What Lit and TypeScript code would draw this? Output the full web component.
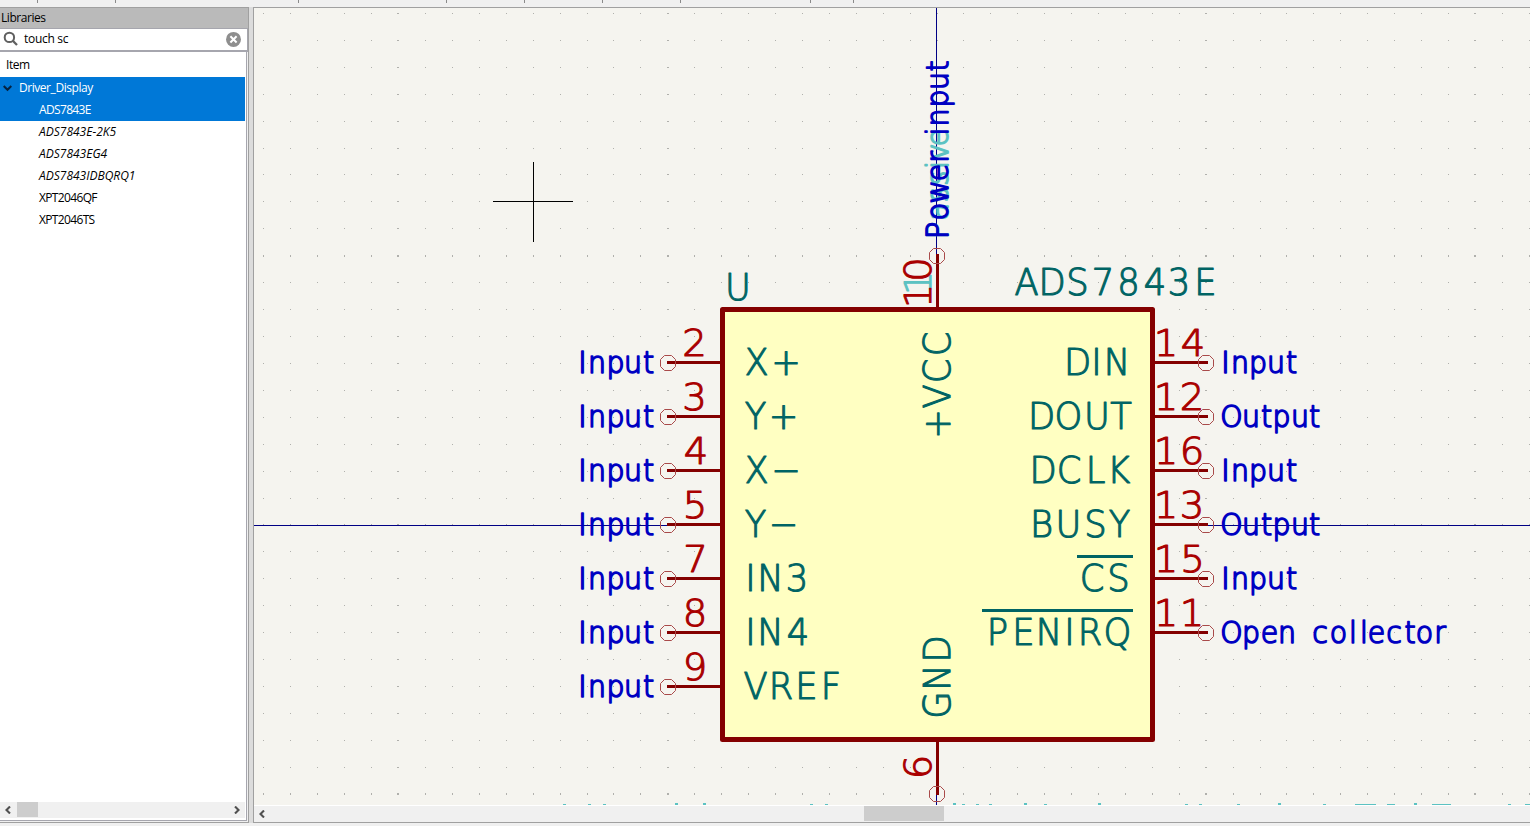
import { LitElement, html, svg, css } from "lit";
import { customElement } from "lit/decorators.js";

type Kind = "name" | "num" | "type" | "ghost" | "ghostnum";

interface Glyphs {
  text: string;
  at: number[];
  base: number;
  kind: Kind;
  up?: boolean;
  sx?: number;
}

const METRICS: Record<Kind, { size: number; sx: number }> = {
  name: { size: 37.6, sx: 0.94 },
  num: { size: 37.8, sx: 1.02 },
  type: { size: 29.6, sx: 0.96 },
  ghost: { size: 29.6, sx: 0.96 },
  ghostnum: { size: 37.8, sx: 1.02 },
};

const IN_L = [582.5, 597, 615.5, 633, 648.5];
const IN_R = [1225.5, 1240, 1258, 1276, 1291.5];
const OUT_R = [1231.5, 1251, 1266.5, 1281.5, 1300, 1314.5];

interface Pin {
  y: number;
  num: string;
  numAt: number[];
  name: string;
  nameAt: number[];
  type: string;
  typeAt: number[];
  bar?: number;
}

const LEFT: Pin[] = [
  { y: 363, num: "2", numAt: [694.5], name: "X+", nameAt: [756.5, 786], type: "Input", typeAt: IN_L },
  { y: 417, num: "3", numAt: [694.5], name: "Y+", nameAt: [755.5, 783.5], type: "Input", typeAt: IN_L },
  { y: 471, num: "4", numAt: [696], name: "X−", nameAt: [756.5, 786], type: "Input", typeAt: IN_L },
  { y: 525, num: "5", numAt: [695], name: "Y−", nameAt: [755.5, 783.5], type: "Input", typeAt: IN_L },
  { y: 579, num: "7", numAt: [695.5], name: "IN3", nameAt: [750.5, 770.5, 797], type: "Input", typeAt: IN_L },
  { y: 633, num: "8", numAt: [695], name: "IN4", nameAt: [750.5, 770.5, 798], type: "Input", typeAt: IN_L },
  { y: 687, num: "9", numAt: [695], name: "VREF", nameAt: [755.5, 781, 806.5, 831], type: "Input", typeAt: IN_L },
];

const RIGHT: Pin[] = [
  { y: 363, num: "14", numAt: [1166, 1193], name: "DIN", nameAt: [1077.5, 1096.5, 1117], type: "Input", typeAt: IN_R },
  { y: 417, num: "12", numAt: [1166, 1192], name: "DOUT", nameAt: [1041.5, 1068.5, 1097, 1121], type: "Output", typeAt: OUT_R },
  { y: 471, num: "16", numAt: [1166, 1192], name: "DCLK", nameAt: [1043, 1069, 1095.5, 1118.5], type: "Input", typeAt: IN_R },
  { y: 525, num: "13", numAt: [1166, 1192], name: "BUSY", nameAt: [1041.5, 1068.5, 1095.5, 1119.5], type: "Output", typeAt: OUT_R },
  { y: 579, num: "15", numAt: [1166, 1192.5], name: "CS", nameAt: [1092, 1118.5], type: "Input", typeAt: IN_R, bar: 1077 },
  {
    y: 633, num: "11", numAt: [1166, 1192], name: "PENIRQ", nameAt: [997.5, 1023.5, 1049, 1069.5, 1090, 1117.5],
    type: "Open collector",
    typeAt: [1231.5, 1251, 1269.5, 1287, 1303, 1320, 1338.5, 1353, 1364, 1376.5, 1394, 1410, 1424.5, 1440],
    bar: 982,
  },
];

/* Tops of a label row that is cut off by the lower edge: x, width, height */
const CLIPPED: [number, number, number][] = [
  [563, 3, 1], [588, 3, 1], [603, 3, 1], [675, 3, 2], [703, 3, 2], [810, 3, 1], [825, 3, 1],
  [953, 3, 2], [962, 3, 1], [976, 3, 1], [989, 3, 1], [1024, 3, 2], [1044, 3, 1], [1098, 3, 2],
  [1185, 3, 1], [1199, 3, 1], [1237, 3, 1], [1278, 3, 2], [1323, 3, 1], [1355, 21, 1],
  [1387, 8, 1], [1414, 3, 2], [1432, 19, 1], [1508, 3, 1], [1525, 5, 1],
];

function glyphs(g: Glyphs) {
  const m = METRICS[g.kind];
  const sx = g.sx ?? m.sx;
  const xs = g.at.map((v) => ((g.up ? -v : v) / sx).toFixed(2)).join(" ");
  const t = `${g.up ? "rotate(-90) " : ""}scale(${sx} 1)`;
  return svg`<text class=${g.kind} transform=${t} x=${xs} y=${g.base} font-size=${m.size}>${g.text}</text>`;
}

function ring(x: number, y: number) {
  const a = 7.5, b = 3.5;
  const p = [[-b, -a], [b, -a], [a, -b], [a, b], [b, a], [-b, a], [-a, b], [-a, -b]]
    .map(([dx, dy]) => `${x + dx},${y + dy}`).join(" ");
  return svg`<polygon class="ring" points=${p}></polygon>`;
}

function dots() {
  const out: string[] = [];
  for (let j = -19; j <= 10; j++) {
    for (let i = -25; i <= 22; i++) {
      const wx = i % 10 === 0 ? 2 : 1;
      const hy = j % 10 === 0 ? 2 : 1;
      const x = wx === 2 ? Math.round(936.9 + i * 26.92) - 1 : Math.floor(936.965 + i * 26.92);
      const y = hy === 2 ? Math.round(524.8 + j * 26.92) - 1 : Math.floor(524.925 + j * 26.92);
      out.push(`M${x} ${y}h${wx}v${hy}h${-wx}z`);
    }
  }
  return out.join("");
}

@customElement("symbol-canvas")
export class SymbolCanvas extends LitElement {
  static styles = css`
    :host { display: block; flex: 1; min-height: 0; background: #f5f4ef; overflow: hidden; }
    svg { display: block; }
    .crisp { shape-rendering: crispEdges; }
    .grid { fill: #b0b0ac; }
    .axis { fill: #000084; }
    .cursor { fill: #000; }
    .pin { fill: #840000; }
    .body { fill: #ffffc2; stroke: #840000; stroke-width: 5; stroke-linejoin: round; }
    .ring { fill: none; stroke: #a94a4a; stroke-width: 1; }
    .bar { fill: #006464; }
    .cut { fill: #5cc2c2; }
    text {
      font-family: "DejaVu Sans Light", "DejaVu Sans", sans-serif;
      font-weight: 200;
      text-anchor: middle;
      stroke-linejoin: round;
      vector-effect: non-scaling-stroke;
    }
    .name { fill: #006464; stroke: #006464; stroke-width: 1.1; }
    .num { fill: #a90000; stroke: #a90000; stroke-width: 1.1; }
    .type { fill: #0000c2; stroke: #0000c2; stroke-width: 1.6; }
    .ghost { fill: #5cc2c2; stroke: #5cc2c2; stroke-width: 1.6; }
    .ghostnum { fill: #5cc2c2; stroke: #5cc2c2; stroke-width: 1.1; }
  `;

  private pin(p: Pin, x: number, cx: number) {
    return svg`
      <rect class="pin crisp" x=${x} y=${p.y - 2} width="53" height="3"></rect>
      ${ring(cx, p.y)}
      ${glyphs({ text: p.num, at: p.numAt, base: p.y - 6.6, kind: "num" })}
      ${glyphs({ text: p.name, at: p.nameAt, base: p.y + 12.2, kind: "name" })}
      ${glyphs({ text: p.type, at: p.typeAt, base: p.y + 10.2, kind: "type" })}
      ${p.bar ? svg`<rect class="bar crisp" x=${p.bar} y=${p.y - 24} width=${1133 - p.bar} height="3"></rect>` : ""}
    `;
  }

  render() {
    return html`<svg width="1276" height="797" viewBox="254 8 1276 797">
      <path class="grid crisp" d=${dots()}></path>
      <rect class="axis crisp" x="936" y="8" width="1" height="797"></rect>
      <rect class="axis crisp" x="254" y="525" width="1276" height="1"></rect>
      <rect class="body" x="722.5" y="309.5" width="430" height="430"></rect>
      ${CLIPPED.map(([x, w, h]) => svg`<rect class="cut crisp" x=${x} y=${805 - h} width=${w} height=${h}></rect>`)}
      ${glyphs({ text: "Passive", at: [230.5, 211.5, 194.5, 178, 165, 152, 137.5], base: 947.6, kind: "ghost", up: true })}
      ${glyphs({ text: "1", at: [283], base: 930.6, kind: "ghostnum", up: true })}
      <rect class="pin crisp" x="936" y="254" width="3" height="54"></rect>
      <rect class="pin crisp" x="936" y="741" width="3" height="54"></rect>
      ${ring(937, 256)} ${ring(937, 794)}
      ${glyphs({ text: "10", at: [296, 269.5], base: 930.6, kind: "num", up: true })}
      ${glyphs({ text: "6", at: [767], base: 930.6, kind: "num", up: true })}
      ${glyphs({ text: "Power input", at: [230.5, 211.5, 192, 172.5, 157, 145, 131.5, 117.5, 98.5, 81, 66], base: 947.6, kind: "type", up: true })}
      ${glyphs({ text: "+VCC", at: [424, 396.5, 371, 344], base: 949.8, kind: "name", up: true })}
      ${glyphs({ text: "GND", at: [705, 677.5, 649], base: 949.8, kind: "name", up: true })}
      ${glyphs({ text: "U", at: [738], base: 299.6, kind: "name" })}
      ${glyphs({ text: "ADS7843E", at: [1026.5, 1052, 1077.5, 1103, 1128.5, 1155, 1179, 1205.5], base: 295, kind: "name" })}
      ${LEFT.map((p) => this.pin(p, 667, 668))}
      ${RIGHT.map((p) => this.pin(p, 1155, 1206))}
      <rect class="cursor crisp" x="493" y="201" width="80" height="1"></rect>
      <rect class="cursor crisp" x="533" y="162" width="1" height="80"></rect>
    </svg>`;
  }
}

const ITEMS = [
  { text: "ADS7843E", on: true, alias: false },
  { text: "ADS7843E-2K5", on: false, alias: true },
  { text: "ADS7843EG4", on: false, alias: true },
  { text: "ADS7843IDBQRQ1", on: false, alias: true },
  { text: "XPT2046QF", on: false, alias: false },
  { text: "XPT2046TS", on: false, alias: false },
];

@customElement("library-panel")
export class LibraryPanel extends LitElement {
  static styles = css`
    :host {
      display: flex; flex-direction: column; box-sizing: border-box; width: 249px; height: 816px;
      border-top: 1px solid #a0a0a0; border-right: 1px solid #a0a0a0; border-bottom: 1px solid #a0a0a0;
      background: #f0f0f0; color: #000;
      font: 12px/16px "Open Sans", "Noto Sans", sans-serif; letter-spacing: -0.45px;
    }
    .title { height: 20px; box-sizing: border-box; padding: 2px 1px 0; background: #bababa; }
    .search {
      display: flex; align-items: center; box-sizing: border-box; height: 24px;
      padding: 0 5px 2px 3px; border: solid #a6a6ae; border-width: 1px 1px 2px 0; background: #fff;
    }
    .query { flex: 1; padding-left: 5px; letter-spacing: -0.3px; }
    .list {
      flex: 1; display: flex; flex-direction: column; box-sizing: border-box; width: 247px; min-height: 0;
      border-right: 1px solid #a6a6ae; border-bottom: 1px solid #a6a6ae; background: #fff; padding: 0 1px 2px 0;
      margin-bottom: 1px;
    }
    .head { height: 25px; box-sizing: border-box; padding: 5px 6px 0; }
    .row { display: flex; align-items: center; height: 22px; box-sizing: border-box; padding-left: 39px; letter-spacing: -0.65px; }
    .group { padding-left: 3px; letter-spacing: -0.45px; }
    .group .label { padding-left: 7px; }
    .on { background: #0078d7; color: #fff; }
    .alias { font-style: italic; letter-spacing: 0; }
    .fill { flex: 1; }
    .scroll { display: flex; align-items: center; justify-content: space-between; height: 16px; padding: 0 5px 0 5px; background: #f0f0f0; }
    .thumb { width: 21px; height: 15px; background: #cdcdcd; margin: 0 0 1px 6px; }
    .gap { flex: 1; }
  `;
  render() {
    return html`
      <div class="title">Libraries</div>
      <div class="search">
        <svg width="16" height="16" viewBox="0 0 16 16"><circle cx="6.4" cy="6.4" r="4.7" fill="none" stroke="#606060" stroke-width="2"></circle><path d="M9.8 9.8L14 14" stroke="#606060" stroke-width="2.3"></path></svg>
        <span class="query">touch sc</span>
        <svg width="16" height="16" viewBox="0 0 16 16"><circle cx="7.5" cy="8.4" r="7.5" fill="#8e8e8e"></circle><path d="M4.4 5.3l6.2 6.2M10.6 5.3l-6.2 6.2" stroke="#fff" stroke-width="2"></path></svg>
      </div>
      <div class="list">
        <div class="head">Item</div>
        <div class="row group on">
          <svg width="9" height="8" viewBox="0 0 9 8"><path d="M.7 2l3.8 3.8L8.3 2" fill="none" stroke="#06223f" stroke-width="2"></path></svg>
          <span class="label">Driver_Display</span>
        </div>
        ${ITEMS.map((i) => html`<div class="row ${i.on ? "on" : ""} ${i.alias ? "alias" : ""}">${i.text}</div>`)}
        <div class="fill"></div>
        <div class="scroll">
          <svg width="6" height="8" viewBox="0 0 6 8"><path d="M5 .5L1.5 4L5 7.5" fill="none" stroke="#505050" stroke-width="2.1"></path></svg>
          <div class="thumb"></div><div class="gap"></div>
          <svg width="6" height="8" viewBox="0 0 6 8"><path d="M1 .5L4.5 4L1 7.5" fill="none" stroke="#505050" stroke-width="2.1"></path></svg>
        </div>
      </div>
    `;
  }
}

const TICKS = [37, 115, 298, 446, 524, 602, 680, 810, 853];

@customElement("app-root")
export class AppRoot extends LitElement {
  static styles = css`
    :host { display: flex; flex-direction: column; width: 1530px; height: 826px; background: #f0f0f0; overflow: hidden; }
    .toolbar { display: block; height: 7px; flex: none; }
    .main { display: flex; height: 816px; }
    .split { width: 4px; background: #dcdcdc; }
    .view {
      display: flex; flex-direction: column; flex: 1; min-width: 0; box-sizing: border-box;
      border-top: 1px solid #a0a0a0; border-left: 1px solid #a0a0a0; border-bottom: 1px solid #a0a0a0;
    }
    .scroll { display: flex; align-items: center; height: 17px; box-sizing: border-box; border-top: 1px solid #fff; padding-left: 5px; background: #f0f0f0; }
    .thumb { width: 80px; height: 15px; margin-left: 599px; margin-bottom: 1px; background: #cdcdcd; }
  `;
  render() {
    return html`
      <svg class="toolbar" width="1530" height="7">${TICKS.map((x) => svg`<rect x=${x} y="0" width="1" height="3" fill="#8a8a8a"></rect>`)}</svg>
      <div class="main">
        <library-panel></library-panel>
        <div class="split"></div>
        <div class="view">
          <symbol-canvas></symbol-canvas>
          <div class="scroll">
            <svg width="6" height="8" viewBox="0 0 6 8"><path d="M5 .5L1.5 4L5 7.5" fill="none" stroke="#505050" stroke-width="2.1"></path></svg>
            <div class="thumb"></div>
          </div>
        </div>
      </div>
    `;
  }
}
